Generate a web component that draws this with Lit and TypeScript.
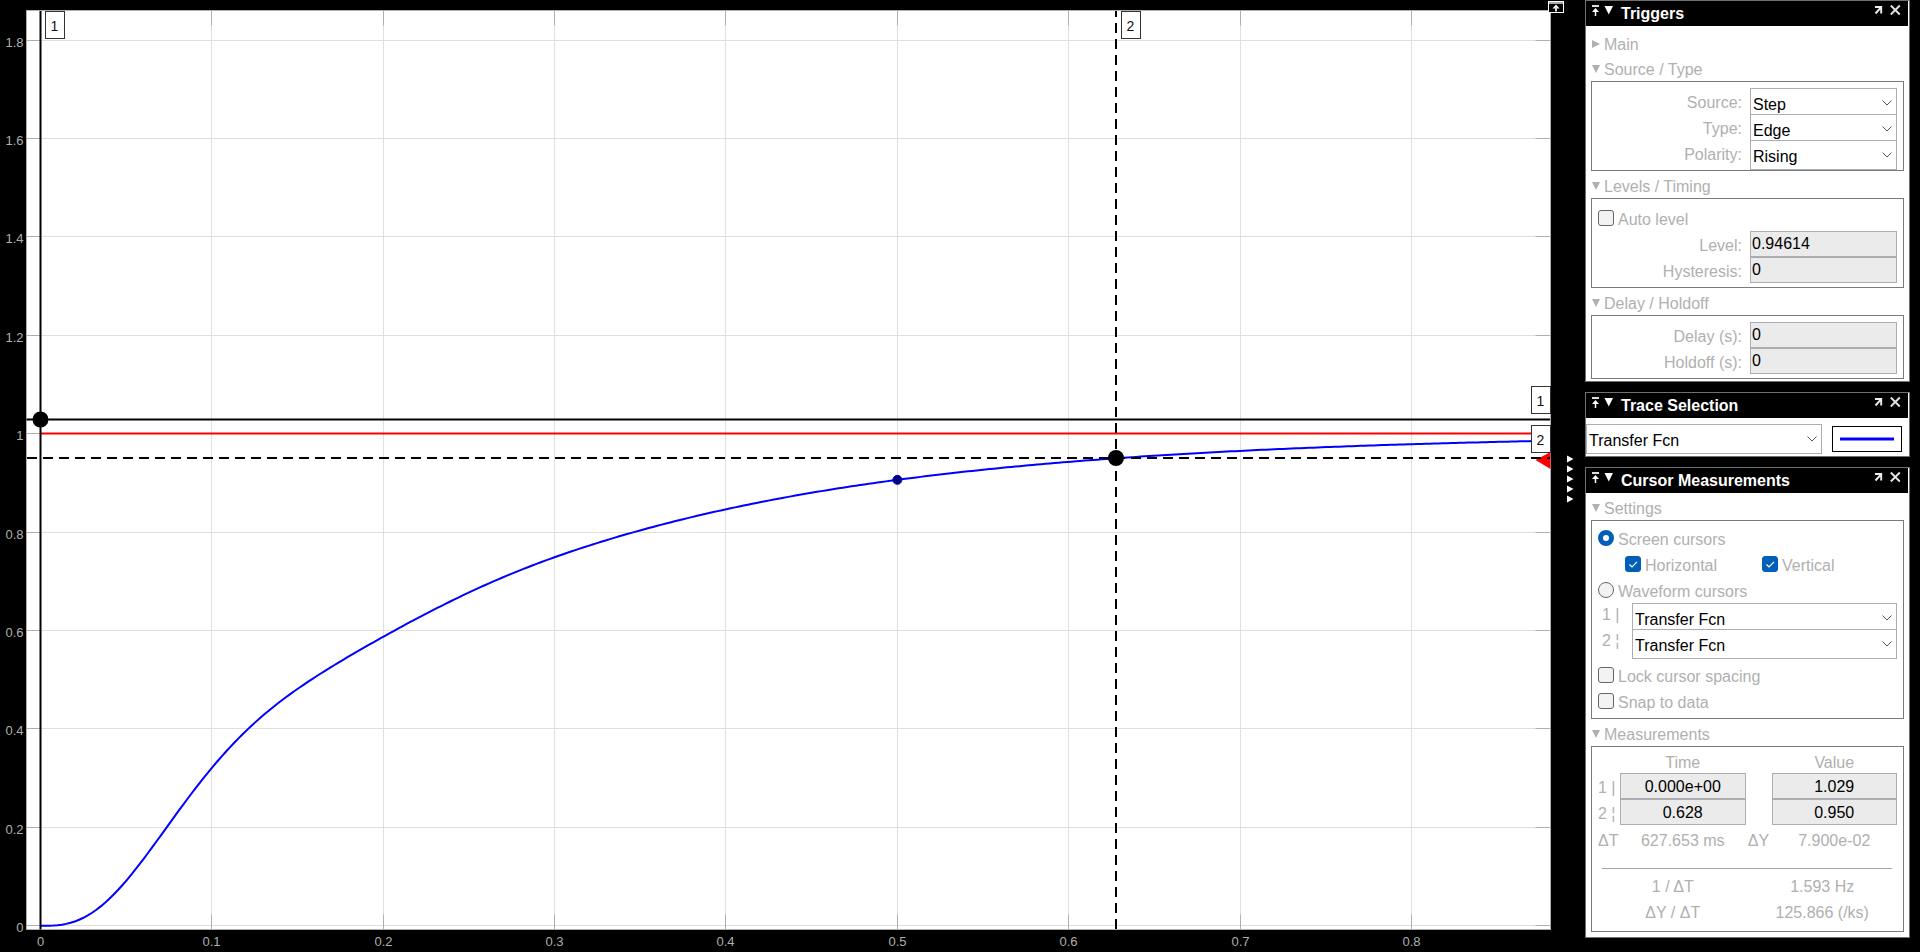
import { LitElement, html, svg, css, nothing } from "lit";
import { customElement, property, state } from "lit/decorators.js";

const MARGIN = { left: 26, top: 10, right: 14, bottom: 23 };
const DOMAIN = { x0: -0.00805, x1: 0.881, y0: -0.0077, y1: 1.86 };
const X_TICKS = [0, 0.1, 0.2, 0.3, 0.4, 0.5, 0.6, 0.7, 0.8];
const Y_TICKS = [0, 0.2, 0.4, 0.6, 0.8, 1, 1.2, 1.4, 1.6, 1.8];

// Step response of the transfer function: one slow real pole and a damped complex pair.
const response = (t: number) =>
  1 - 1.104 * Math.exp(-4.93 * t) +
  Math.exp(-19 * t) * (0.104 * Math.cos(37.3 * t) - 0.0935 * Math.sin(37.3 * t));

const amplitude = (t: number) => Math.max(0, response(t));

@customElement("scope-plot")
class ScopePlot extends LitElement {
  @state() private w = 1564;
  @state() private h = 952;
  private observer?: ResizeObserver;

  static styles = css`
    :host { display: block; position: relative; min-width: 0; min-height: 0; background: #000; }
    .canvas { display: block; width: 100%; height: 100%; }
    .tick-label { font: 13px "Liberation Sans", Arial, sans-serif; fill: #afafaf; }
    .cursor-label { font: 14px "Liberation Sans", Arial, sans-serif; fill: #111; text-anchor: middle; }
    .grid { stroke: #dfdfdf; }
    .tick { stroke: #afafaf; }
    .cursor { stroke: #000; stroke-width: 2; fill: none; }
    .dashed { stroke-dasharray: 10 6; }
    .flag { fill: #fff; stroke: #333; }
    .maximize {
      position: absolute; top: 1px; right: 0; width: 16px; height: 12px;
      padding: 0; border: 0; background: none; display: block;
    }
    .maximize svg { display: block; }
  `;

  connectedCallback() {
    super.connectedCallback();
    this.observer = new ResizeObserver(() => {
      const box = this.getBoundingClientRect();
      if (box.width && box.height) {
        this.w = box.width;
        this.h = box.height;
      }
    });
    this.observer.observe(this);
  }

  disconnectedCallback() {
    this.observer?.disconnect();
    super.disconnectedCallback();
  }

  render() {
    const L = MARGIN.left + 0.5, T = MARGIN.top + 0.5;
    const R = Math.floor(this.w) - MARGIN.right + 0.5;
    const B = Math.floor(this.h) - MARGIN.bottom + 0.5;
    const sx = (v: number) => L + ((v - DOMAIN.x0) / (DOMAIN.x1 - DOMAIN.x0)) * (R - L);
    const sy = (v: number) => B - ((v - DOMAIN.y0) / (DOMAIN.y1 - DOMAIN.y0)) * (B - T);
    const snap = (v: number) => Math.floor(v) + 0.5;

    const steps = 350;
    const points = Array.from({ length: steps + 1 }, (_, i) => {
      const t = (i / steps) * DOMAIN.x1;
      return `${sx(t).toFixed(2)},${sy(amplitude(t)).toFixed(2)}`;
    }).join(" ");

    const c1x = snap(sx(0)), c2x = Math.round(sx(0.6275));
    const c1y = snap(sy(1.029)), c2y = Math.round(sy(0.95));
    const levelY = Math.round(sy(0.94614));
    const flag = (x: number, y: number, n: number) => svg`
      <rect class="flag" x=${x} y=${y} width="19" height="27"></rect>
      <text class="cursor-label" x=${x + 9} y=${y + 19}>${n}</text>`;

    return html`
      <svg class="canvas" role="img" aria-label="Step response">
        <rect x=${L} y=${T} width=${R - L} height=${B - T} fill="#fff"></rect>
        ${X_TICKS.map((t) => {
          const x = snap(sx(t));
          return svg`<line class="grid" x1=${x} x2=${x} y1=${T} y2=${B}></line>`;
        })}
        ${Y_TICKS.map((t) => {
          const y = snap(sy(t));
          return svg`<line class="grid" x1=${L} x2=${R} y1=${y} y2=${y}></line>`;
        })}
        ${X_TICKS.map((t) => {
          const x = snap(sx(t));
          return svg`
            <path class="tick" d="M${x} ${T}v15M${x} ${B}v-15"></path>
            <text class="tick-label" text-anchor="middle" x=${x} y=${B + 16}>${t}</text>`;
        })}
        ${Y_TICKS.map((t) => {
          const y = snap(sy(t));
          return svg`
            <path class="tick" d="M${L} ${y}h15M${R} ${y}h-15"></path>
            <text class="tick-label" text-anchor="end" x=${L - 3} y=${y + 6}>${t}</text>`;
        })}
        <rect x=${L} y=${T} width=${R - L} height=${B - T} fill="none" stroke="#afafaf"></rect>
        <line x1=${sx(0)} x2=${R} y1=${snap(sy(1))} y2=${snap(sy(1))} stroke="#f00" stroke-width="2"></line>
        <polyline points=${points} fill="none" stroke="#00f" stroke-width="2"></polyline>
        <circle cx=${sx(0.5)} cy=${sy(amplitude(0.5))} r="4.5" fill="#00007f" stroke="#0000c8"></circle>
        <path d="M${R - 15} ${levelY}L${R} ${levelY - 8}V${levelY + 9}z" fill="#f00"></path>
        <path class="cursor" d="M${c1x} ${T + 0.5}V${B}M${L} ${c1y}H${R - 0.5}"></path>
        <path class="cursor dashed" stroke-dashoffset="4" d="M${c2x} ${T + 0.5}V${B}"></path>
        <path class="cursor dashed" d="M${L + 0.5} ${c2y}H${R - 0.5}"></path>
        <circle cx=${c1x} cy=${c1y} r="8"></circle>
        <circle cx=${c2x} cy=${c2y} r="8"></circle>
        ${flag(c1x + 5, T + 1, 1)} ${flag(c2x + 5.5, T + 1, 2)}
        ${flag(R - 19, c1y - 33, 1)} ${flag(R - 19, c2y - 32.5, 2)}
      </svg>
      <button class="maximize" aria-label="Maximize axes">
        <svg width="16" height="12" viewBox="0 0 16 12">
          <rect x=".5" y=".5" width="15" height="11" fill="#000" stroke="#fff"></rect>
          <path d="M1 2h14" stroke="#a8a8a8" stroke-width="2"></path>
          <path d="M8 3.5L11.5 7.5H4.5z" fill="#fff"></path>
          <path d="M8 6v4.500" stroke="#ddd" stroke-width="2"></path>
        </svg>
      </button>`;
  }
}

@customElement("scope-panel")
class ScopePanel extends LitElement {
  @property() heading = "";

  static styles = css`
    :host { display: block; background: #fff; border: 1px solid #707070; }
    .bar {
      display: flex; align-items: flex-start; height: 25px; box-sizing: border-box;
      margin-right: 1px; padding: 3px 8px 0 5px; background: #000;
    }
    .bar button { width: 10px; height: 10px; padding: 0; border: 0; background: none; }
    .bar svg { display: block; }
    .bar .fold { margin-left: 3px; }
    .bar .close { margin-left: 6px; }
    h2 {
      flex: 1; margin: 0 0 0 7px; color: #fff; white-space: nowrap;
      font: bold 16px/20px "Liberation Sans", Arial, sans-serif;
    }
  `;

  render() {
    return html`
      <header class="bar">
        <button aria-label="Pin">
          <svg width="10" height="12" viewBox="0 0 10 12">
            <path d="M1 2h7" stroke="#ddd" stroke-width="2"></path>
            <path d="M4.500 4L8 8H1z" fill="#fff"></path>
            <path d="M4.500 6v6" stroke="#fff" stroke-width="1.500"></path>
          </svg>
        </button>
        <button class="fold" aria-label="Collapse">
          <svg width="10" height="12" viewBox="0 0 10 12"><path d="M.5 2h8.500L4.750 10.500z" fill="#fff"></path></svg>
        </button>
        <h2>${this.heading}</h2>
        <button aria-label="Undock">
          <svg width="10" height="12" viewBox="0 0 10 12">
            <path d="M1 3H7.200V9.500M7 3.300L1.500 9.500" fill="none" stroke="#eee" stroke-width="1.900"></path>
          </svg>
        </button>
        <button class="close" aria-label="Close">
          <svg width="11" height="12" viewBox="0 0 11 12">
            <path d="M.8 1.500l9 9M9.800 1.500l-9 9" stroke="#e4e4e4" stroke-width="1.900"></path>
          </svg>
        </button>
      </header>
      <slot></slot>`;
  }
}

@customElement("app-root")
class AppRoot extends LitElement {
  static styles = css`
    :host {
      display: grid; grid-template-columns: minmax(0, 1fr) 21px 325px; padding-right: 10px;
      box-sizing: border-box; min-height: 100vh; background: #000; color: #b0b0b0;
      font: 16px/24px "Liberation Sans", Arial, sans-serif;
    }
    .splitter {
      display: flex; flex-direction: column; align-items: flex-start; justify-content: center;
      padding: 6px 0 0 3px; border: 0; background: none;
    }
    .splitter svg { display: block; }
    .side { display: flex; flex-direction: column; gap: 10px; }
    .body { padding: 0 5px 2px; }
    .body.long { padding-bottom: 5px; }
    .head {
      display: flex; align-items: center; gap: 4px; height: 27px; box-sizing: border-box; width: 100%;
      padding: 4px 0 0 1px; border: 0; background: none; color: inherit; font: inherit;
    }
    .head.collapsed { height: 28px; padding-top: 9px; }
    .head svg { flex: none; }
    .group { border: 1px solid #7a7a7a; padding: 6px 6px 4px; }
    .group.cursors { padding-top: 4px; }
    .group.results { padding: 4px 6px 6px; }
    .row { display: grid; grid-template-columns: 1fr 147px; column-gap: 8px; height: 26px; }
    .row label { text-align: right; line-height: 30px; }
    .row.wave { grid-template-columns: 26px 1fr; }
    .row.wave label { text-align: left; padding-left: 4px; line-height: 24px; white-space: nowrap; }
    .check { display: flex; align-items: center; gap: 4px; height: 26px; }
    .check label { padding-top: 4px; }
    .pair { display: grid; grid-template-columns: 137px 1fr; padding-left: 27px; }
    .spaced { margin-top: 7px; }
    input { box-sizing: border-box; margin: 0; font: inherit; color: #000; }
    input[type="text"] {
      width: 100%; height: 26px; padding: 0 1px; border: 1px solid #abadb3; border-radius: 0;
      background: #ebebeb; display: block; min-width: 0;
    }
    input[type="checkbox"], input[type="radio"] {
      appearance: none; flex: none; width: 16px; height: 16px; border: 1px solid #666;
      border-radius: 3px; background: #f3f3f3;
    }
    input[type="radio"] { border-radius: 50%; }
    input[type="radio"]:checked { border: 5px solid #005fb8; background: #fff; }
    input[type="checkbox"]:checked {
      border-color: #005fb8;
      background: #005fb8 url("data:image/svg+xml,%3Csvg xmlns='http://www.w3.org/2000/svg' width='14' height='14'%3E%3Cpath d='M3.500 7.500L6 10L11 4.800' fill='none' stroke='white' stroke-width='1.200'/%3E%3C/svg%3E") no-repeat;
    }
    .combo { position: relative; height: 30px; min-width: 0; }
    .combo select {
      appearance: none; display: block; width: 100%; height: 30px; box-sizing: border-box;
      padding: 4px 24px 0 2px; border: 1px solid #abadb3; border-radius: 0; background: #fff;
      color: #000; font: inherit;
    }
    .combo svg { position: absolute; right: 5px; top: 12px; pointer-events: none; }
    .trace { display: flex; align-items: center; gap: 10px; padding: 6px 7px 2px 0; }
    .trace .combo { flex: 1; }
    .swatch {
      display: grid; place-items: center; width: 70px; height: 26px; padding: 0;
      border: 1px solid #000; background: #fff;
    }
    table { border-collapse: collapse; table-layout: fixed; width: 100%; line-height: 22px; }
    th, td { padding: 0; font-weight: normal; text-align: center; white-space: nowrap; }
    th[scope="row"] { text-align: left; }
    th[scope="col"] { padding-top: 2px; line-height: 20px; }
    .reading th { padding-top: 4px; }
    .delta th, .delta td, .ratios th, .ratios td { padding-top: 2px; }
    .mark { width: 22px; }
    .gap { width: 26px; }
    .results input[type="text"] { padding-top: 2px; text-align: center; }
    .delta { height: 30px; }
    hr { margin: 13px 5px 4px 4px; border: 0; border-top: 1px solid #a4a4ac; }
    .ratios tr { height: 26px; }
  `;

  private head(text: string, open = true) {
    return html`<button class="head ${open ? "" : "collapsed"}" aria-expanded=${open}>
      <svg width="8" height="10" viewBox="0 0 8 10">
        <path d=${open ? "M0 0H8L4 8z" : "M0 0V8L8 4z"} fill="#b0b0b0"></path>
      </svg><span>${text}</span></button>`;
  }

  private combo(id: string, value: string, label = "") {
    return html`<div class="combo">
      <select id=${id} aria-label=${label || nothing}><option>${value}</option></select>
      <svg width="10" height="6" viewBox="0 0 10 6"><path d="M.5 .5L5 5L9.500 .5" fill="none" stroke="#555"></path></svg>
    </div>`;
  }

  private choice(label: string, value: string) {
    const id = label.toLowerCase();
    return html`<div class="row"><label for=${id}>${label}:</label>${this.combo(id, value)}</div>`;
  }

  private field(label: string, value: string) {
    const id = label.split(" ")[0].toLowerCase();
    return html`<div class="row"><label for=${id}>${label}:</label><input id=${id} type="text" .value=${value}></div>`;
  }

  private check(id: string, label: string, on = false, type = "checkbox") {
    return html`<div class="check">
      <input id=${id} type=${type} name=${type === "radio" ? "cursor-kind" : id} .checked=${on}>
      <label for=${id}>${label}</label></div>`;
  }

  private reading(mark: string, time: string, value: string) {
    return html`<tr class="reading">
      <th scope="row">${mark}</th>
      <td><input type="text" aria-label="Time ${mark[0]}" .value=${time}></td>
      <td></td>
      <td><input type="text" aria-label="Value ${mark[0]}" .value=${value}></td>
    </tr>`;
  }

  render() {
    return html`
      <scope-plot></scope-plot>
      <button class="splitter" aria-label="Toggle side panels">
        ${[0, 1, 2, 3, 4].map(() => html`<svg width="7" height="10" viewBox="0 0 7 10"><path d="M0 1.500L6.500 5L0 8.500z" fill="#fff"></path></svg>`)}
      </button>
      <aside class="side">
        <scope-panel heading="Triggers">
          <div class="body">
            ${this.head("Main", false)}
            ${this.head("Source / Type")}
            <div class="group">
              ${this.choice("Source", "Step")}
              ${this.choice("Type", "Edge")}
              ${this.choice("Polarity", "Rising")}
            </div>
            ${this.head("Levels / Timing")}
            <div class="group">
              ${this.check("auto", "Auto level")}
              ${this.field("Level", "0.94614")}
              ${this.field("Hysteresis", "0")}
            </div>
            ${this.head("Delay / Holdoff")}
            <div class="group">
              ${this.field("Delay (s)", "0")}
              ${this.field("Holdoff (s)", "0")}
            </div>
          </div>
        </scope-panel>
        <scope-panel heading="Trace Selection">
          <div class="trace">
            ${this.combo("trace", "Transfer Fcn", "Trace")}
            <button class="swatch" aria-label="Line style">
              <svg width="54" height="4"><path d="M0 2h54" stroke="#00f" stroke-width="3"></path></svg>
            </button>
          </div>
        </scope-panel>
        <scope-panel heading="Cursor Measurements">
          <div class="body long">
            ${this.head("Settings")}
            <div class="group cursors">
              ${this.check("screen", "Screen cursors", true, "radio")}
              <div class="pair">
                ${this.check("horizontal", "Horizontal", true)}
                ${this.check("vertical", "Vertical", true)}
              </div>
              ${this.check("waveform", "Waveform cursors", false, "radio")}
              <div class="row wave"><label for="wave1">1 |</label>${this.combo("wave1", "Transfer Fcn")}</div>
              <div class="row wave"><label for="wave2">2 ¦</label>${this.combo("wave2", "Transfer Fcn")}</div>
              <div class="spaced">${this.check("lock", "Lock cursor spacing")}</div>
              ${this.check("snap", "Snap to data")}
            </div>
            ${this.head("Measurements")}
            <div class="group results">
              <table>
                <colgroup><col class="mark"><col><col class="gap"><col></colgroup>
                <thead><tr><td></td><th scope="col">Time</th><td></td><th scope="col">Value</th></tr></thead>
                <tbody>
                  ${this.reading("1 |", "0.000e+00", "1.029")}
                  ${this.reading("2 ¦", "0.628", "0.950")}
                  <tr class="delta"><th scope="row">ΔT</th><td>627.653 ms</td><th>ΔY</th><td>7.900e-02</td></tr>
                </tbody>
              </table>
              <hr>
              <table class="ratios">
                <tbody>
                  <tr><th>1 / ΔT</th><td>1.593 Hz</td></tr>
                  <tr><th>ΔY / ΔT</th><td>125.866 (/ks)</td></tr>
                </tbody>
              </table>
            </div>
          </div>
        </scope-panel>
      </aside>`;
  }
}
